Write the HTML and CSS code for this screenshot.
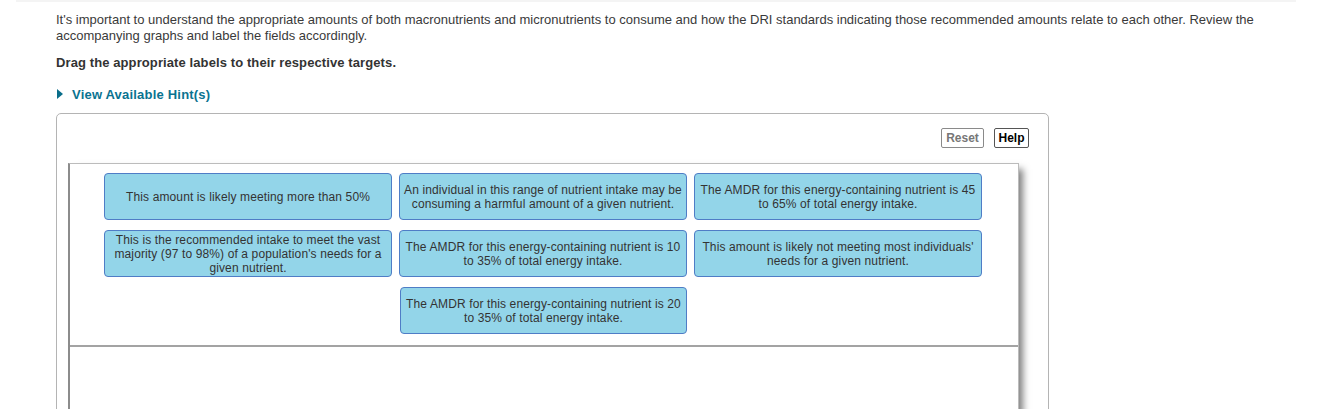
FILE: index.html
```html
<!DOCTYPE html>
<html>
<head>
<meta charset="utf-8">
<link rel="stylesheet" href="styles.css">
</head>
<body>
<div class="strip"></div>
<div class="content">
  <p class="intro">It's important to understand the appropriate amounts of both macronutrients and micronutrients to consume and how the DRI standards indicating those recommended amounts relate to each other. Review the accompanying graphs and label the fields accordingly.</p>
  <p class="instr">Drag the appropriate labels to their respective targets.</p>
  <div class="hint"><span class="tri"></span><span class="hint-text">View Available Hint(s)</span></div>
  <div class="box">
    <div class="toolbar">
      <span class="btn btn-reset">Reset</span>
      <span class="btn btn-help">Help</span>
    </div>
    <div class="panel">
      <div class="labels">
        <div class="label">This amount is likely meeting more than 50%</div>
        <div class="label">An individual in this range of nutrient intake may be consuming a harmful amount of a given nutrient.</div>
        <div class="label">The AMDR for this energy-containing nutrient is 45 to 65% of total energy intake.</div>
        <div class="label">This is the recommended intake to meet the vast majority (97 to 98%) of a population's needs for a given nutrient.</div>
        <div class="label">The AMDR for this energy-containing nutrient is 10 to 35% of total energy intake.</div>
        <div class="label">This amount is likely not meeting most individuals' needs for a given nutrient.</div>
        <div class="label col2">The AMDR for this energy-containing nutrient is 20 to 35% of total energy intake.</div>
      </div>
      <div class="target"></div>
    </div>
  </div>
</div>
</body>
</html>
```
FILE: styles.css
```css
html, body {
  margin: 0;
  padding: 0;
  background: #fff;
  overflow: hidden;
}
body {
  font-family: "Liberation Sans", Arial, sans-serif;
  font-size: 12px;
  color: #333;
}
.strip {
  margin-left: 16px;
  width: 1280px;
  height: 2px;
  background: #f4f4f4;
}
.content {
  padding-left: 56px;
  width: 1230px;
}
.intro {
  margin: 10px 0 0 0;
  font-size: 13px;
  line-height: 16px;
  color: #3a3a3a;
}
.instr {
  margin: 11px 0 0 0;
  font-size: 13px;
  line-height: 16px;
  font-weight: bold;
  letter-spacing: 0.1px;
}
.hint {
  margin-top: 15px;
  height: 16px;
  display: flex;
  align-items: center;
  gap: 9px;
  padding-left: 1px;
}
.tri {
  width: 0;
  height: 0;
  border-top: 5px solid transparent;
  border-bottom: 5px solid transparent;
  border-left: 6px solid #0a6e8a;
}
.hint-text {
  color: #0a7391;
  font-size: 13px;
  font-weight: bold;
  letter-spacing: 0.2px;
}
.box {
  box-sizing: border-box;
  margin-top: 11px;
  width: 993px;
  height: 320px;
  border: 1px solid #b4b4b4;
  border-radius: 5px;
  padding: 0 29px 0 11px;
}
.toolbar {
  display: flex;
  justify-content: flex-end;
  gap: 10px;
  padding: 14px 0 15px 0;
  margin-right: -10px;
}
.btn {
  box-sizing: border-box;
  display: flex;
  align-items: center;
  justify-content: center;
  height: 20px;
  border-radius: 2px;
  font-weight: bold;
  font-size: 12px;
}
.btn-reset {
  width: 43px;
  border: 1px solid #8a8a8a;
  color: #777;
}
.btn-help {
  width: 35px;
  border: 1px solid #555;
  color: #000;
}
.panel {
  border-top: 1px solid #bcbcbc;
  border-left: 2px solid #8c8c8c;
  border-right: 1px solid #bcbcbc;
  height: 300px;
  box-shadow: 7px 3px 7px -3px rgba(0, 0, 0, 0.5);
}
.labels {
  display: grid;
  grid-template-columns: repeat(3, 288px);
  grid-auto-rows: 47px;
  column-gap: 7px;
  row-gap: 10px;
  padding: 9px 0 11px 34px;
}
.label {
  box-sizing: border-box;
  display: flex;
  align-items: center;
  justify-content: center;
  text-align: center;
  padding: 0 2px;
  background: #93d5e9;
  border: 1px solid #4f7dc6;
  border-radius: 4px;
  line-height: 14px;
  letter-spacing: 0.12px;
  color: #333;
}
.col2 {
  grid-column: 2;
  margin-left: 1px;
}
.target {
  border-top: 2px solid #a3a3a3;
}
```
